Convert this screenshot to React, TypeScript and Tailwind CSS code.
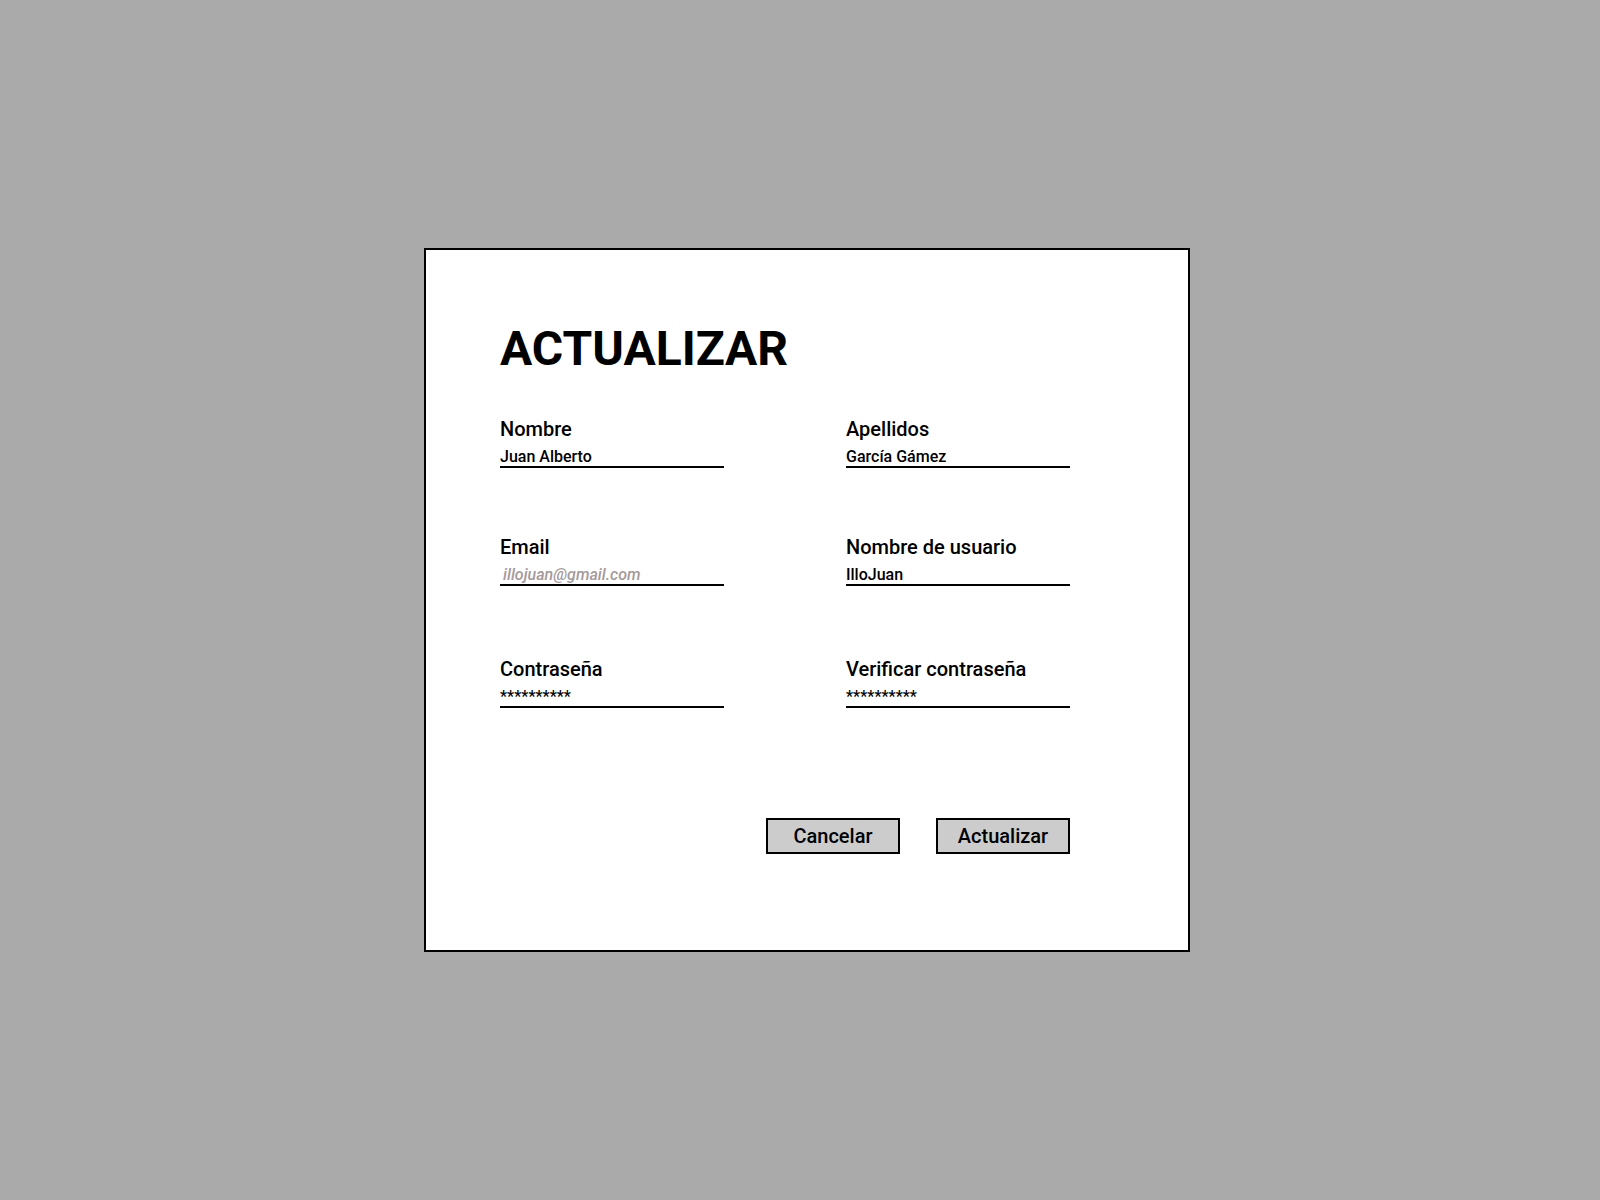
import React from 'react';

interface FieldProps {
    label: string;
    value: string;
    placeholder?: boolean;
}

const Field: React.FC<FieldProps> = ({ label, value, placeholder }) => (
    <div className="flex flex-col w-[224px]">
        <span className="text-[20px] leading-[22px] font-medium text-black whitespace-nowrap">{label}</span>
        <span
            className={`mt-2 text-[16px] leading-[18px] border-b-2 border-black whitespace-nowrap ${
                placeholder ? 'italic font-medium text-[#a59a9a] pl-[3px]' : 'font-medium text-black'
            }`}
        >
            {value}
        </span>
    </div>
);

const Button: React.FC<{ label: string }> = ({ label }) => (
    <button className="w-[134px] h-[36px] border-2 border-black bg-[#cccccc] text-[20px] leading-none font-medium text-black">
        {label}
    </button>
);

export default function App() {
    return (
        <div className="min-h-screen w-full bg-[#aaaaaa] flex items-center pl-[424px] font-['Roboto',sans-serif]">
            <div className="w-[766px] h-[704px] bg-white border-2 border-black pl-[74px] pt-[75px]">
                <div className="w-[570px] flex flex-col">
                    <h1 className="text-[48px] leading-none font-bold text-black">ACTUALIZAR</h1>

                    <div className="mt-[45px] flex gap-[122px]">
                        <Field label="Nombre" value="Juan Alberto" />
                        <Field label="Apellidos" value="García Gámez" />
                    </div>
                    <div className="mt-[68px] flex gap-[122px]">
                        <Field label="Email" value="illojuan@gmail.com" placeholder />
                        <Field label="Nombre de usuario" value="IlloJuan" />
                    </div>
                    <div className="mt-[72px] flex gap-[122px]">
                        <Field label="Contraseña" value="**********" />
                        <Field label="Verificar contraseña" value="**********" />
                    </div>

                    <div className="mt-[110px] flex justify-end gap-[36px]">
                        <Button label="Cancelar" />
                        <Button label="Actualizar" />
                    </div>
                </div>
            </div>
        </div>
    );
}
